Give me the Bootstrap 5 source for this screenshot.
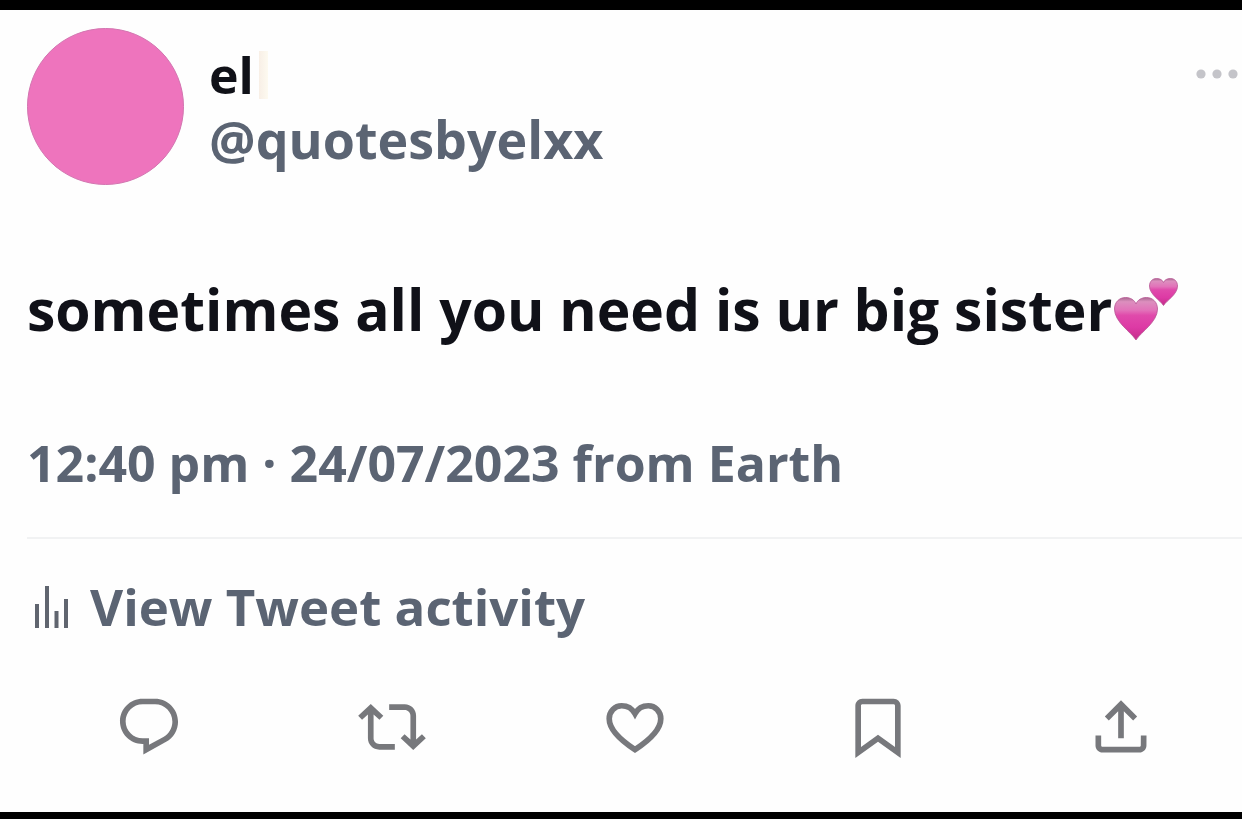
<!DOCTYPE html>
<html lang="en">
<head>
<meta charset="utf-8">
<meta name="viewport" content="width=device-width, initial-scale=1">
<title>el (@quotesbyelxx)</title>
<link rel="stylesheet" href="https://cdn.jsdelivr.net/npm/bootstrap@5.3.0/dist/css/bootstrap.min.css">
<style>
  body { font-family: "Open Sans", "Noto Sans", sans-serif; font-weight: 700; background: #000; }
  .tweet { background: #fefefe; border-top: 10px solid #000; border-bottom: 7px solid #000; padding: 18px 0 0 27px; }
  .avatar { width: 157px; height: 157px; background: #ee74bd; border: 1px solid #d374b0; }
  .ink { color: #101118; }
  .slate { color: #5b6473; }
  .line-text { font-size: 50px; line-height: 64px; }
  .handle { font-size: 52px; line-height: 64px; }
  .message { font-size: 57px; line-height: 80px; margin: 84px 0 82px; gap: 2px; }
  .name-mark { width: 9px; height: 48px; margin-left: 5px; background: linear-gradient(90deg, #f8efe6, #fdfaf0); }
  .identity { gap: 25px; }
  .more { padding: 41px 4px 41px 0; }
  .rule { border-top: 2px solid #f1f2f3; margin-top: 42px; padding-top: 35px; }
  .activity { font-size: 51px; line-height: 64px; gap: 21px; padding-left: 7px; }
  .actions { padding: 55px 0 50px 1px; color: #77787c; }
  svg { display: block; flex: none; }
</style>
</head>
<body>
<article class="tweet d-flex flex-column min-vh-100">
  <header class="d-flex align-items-start justify-content-between">
    <div class="identity d-flex align-items-center">
      <div class="avatar rounded-circle flex-shrink-0"></div>
      <div>
        <div class="d-flex align-items-center line-text ink">el<span class="name-mark"></span></div>
        <a href="#" class="handle slate d-block text-decoration-none">@quotesbyelxx</a>
      </div>
    </div>
    <button type="button" class="more btn border-0" aria-label="More">
      <svg width="42" height="10" fill="#c4c4c9"><circle cx="5" cy="5" r="4.6"/><circle cx="21" cy="5" r="4.6"/><circle cx="37" cy="5" r="4.6"/></svg>
    </button>
  </header>

  <p class="message ink d-flex align-items-center">sometimes all you need is ur big sister
    <svg width="64" height="63" viewBox="0 0 64 63" role="img" aria-label="two hearts">
      <defs>
        <linearGradient id="pink" x1="0" y1="0" x2="0" y2="1"><stop offset="0" stop-color="#a8688f"/><stop offset=".1" stop-color="#dc8fbe"/><stop offset=".3" stop-color="#e272b9"/><stop offset=".42" stop-color="#e04aab"/><stop offset=".7" stop-color="#dd3aa5"/><stop offset="1" stop-color="#c42d8a"/></linearGradient>
      </defs>
      <g fill="url(#pink)" stroke="#b85594" stroke-width=".8">
        <path d="M22 62C17 54 .5 44 .5 31C.5 24 5.500 19.500 11.500 19.500C16.500 19.500 20.500 22 22 26C23.500 22 27.500 19.500 32.500 19.500C38.500 19.500 43.500 24 43.500 31C43.500 44 27 54 22 62Z"/>
        <path d="M49.500 27.500C46 22 35.500 16.500 35.500 8C35.500 3.500 38.500 .5 42.500 .5C46 .5 48.500 2 49.500 4.500C50.500 2 53 .5 56.500 .5C60.500 .5 63.500 3.500 63.500 8C63.500 16.500 53 22 49.500 27.500Z"/>
      </g>
    </svg>
  </p>

  <div class="line-text slate">12:40 pm · 24/07/2023 from Earth</div>

  <div class="rule">
    <a href="#" class="activity slate d-flex align-items-center text-decoration-none">
      <svg width="35" height="43" fill="none" stroke="#60656f" stroke-width="4"><path d="M3 19V43M13 1V43M22.500 26V43M32 14V43"/></svg>
      View Tweet activity
    </a>
  </div>

  <div class="actions row row-cols-5 g-0">
    <div class="col d-flex justify-content-center"><button type="button" class="btn p-0 border-0 text-reset" aria-label="Reply">
      <svg width="68" height="68" viewBox="0 0 24 24" fill="currentColor"><path d="M1.751 10c0-4.42 3.584-8 8.005-8h4.366c4.490 0 8.129 3.640 8.129 8.130 0 2.960-1.607 5.680-4.196 7.110l-8.054 4.460v-3.690h-.067c-4.490.1-8.183-3.510-8.183-8.010zm8.005-6c-3.317 0-6.005 2.690-6.005 6 0 3.370 2.770 6.080 6.138 6.010l.351-.010h1.761v2.300l5.087-2.810c1.951-1.080 3.163-3.130 3.163-5.360 0-3.390-2.744-6.130-6.129-6.130H9.756z"/></svg>
    </button></div>
    <div class="col d-flex justify-content-center"><button type="button" class="btn p-0 border-0 text-reset" aria-label="Retweet">
      <svg width="68" height="68" viewBox="0 0 24 24" fill="currentColor"><path d="M4.500 3.880l4.432 4.140-1.364 1.460L5.500 7.550V16c0 1.100.896 2 2 2H13v2H7.500c-2.209 0-4-1.790-4-4V7.550L1.432 9.480.068 8.020 4.500 3.880zM16.500 6H11V4h5.500c2.209 0 4 1.790 4 4v8.450l2.068-1.930 1.364 1.460-4.432 4.140-4.432-4.140 1.364-1.460 2.068 1.930V8c0-1.100-.896-2-2-2z"/></svg>
    </button></div>
    <div class="col d-flex justify-content-center"><button type="button" class="btn p-0 border-0 text-reset" aria-label="Like">
      <svg width="68" height="68" viewBox="0 0 24 24" fill="none" stroke="currentColor" stroke-width="2"><path d="M12 20C8.500 17.700 2.900 13.500 2.900 9.100C2.900 6.400 4.900 4.500 7.300 4.500C9.300 4.500 11 5.500 12 7.300C13 5.500 14.700 4.500 16.700 4.500C19.100 4.500 21.100 6.400 21.100 9.100C21.100 13.500 15.500 17.700 12 20Z"/></svg>
    </button></div>
    <div class="col d-flex justify-content-center"><button type="button" class="btn p-0 border-0 text-reset" aria-label="Bookmark">
      <svg width="68" height="68" viewBox="0 0 24 24" fill="currentColor"><path d="M4 4.500C4 3.120 5.119 2 6.500 2h11C18.881 2 20 3.120 20 4.500v18.440l-8-5.710-8 5.710V4.500zM6.500 4c-.276 0-.5.220-.5.500v14.560l6-4.290 6 4.290V4.500c0-.280-.224-.5-.5-.5h-11z"/></svg>
    </button></div>
    <div class="col d-flex justify-content-center"><button type="button" class="btn p-0 border-0 text-reset" aria-label="Share">
      <svg width="68" height="68" viewBox="0 0 24 24" fill="currentColor"><path d="M12 2.590l5.700 5.700-1.410 1.420L13 6.410V16h-2V6.410l-3.300 3.300-1.410-1.420L12 2.590zM21 15l-.020 3.510c0 1.380-1.120 2.490-2.500 2.490H5.500C4.110 21 3 19.880 3 18.500V15h2v3.500c0 .280.220.5.5.5h12.980c.280 0 .5-.220.5-.5L19 15h2z"/></svg>
    </button></div>
  </div>
</article>
<script src="https://cdn.jsdelivr.net/npm/bootstrap@5.3.0/dist/js/bootstrap.bundle.min.js"></script>
</body>
</html>
